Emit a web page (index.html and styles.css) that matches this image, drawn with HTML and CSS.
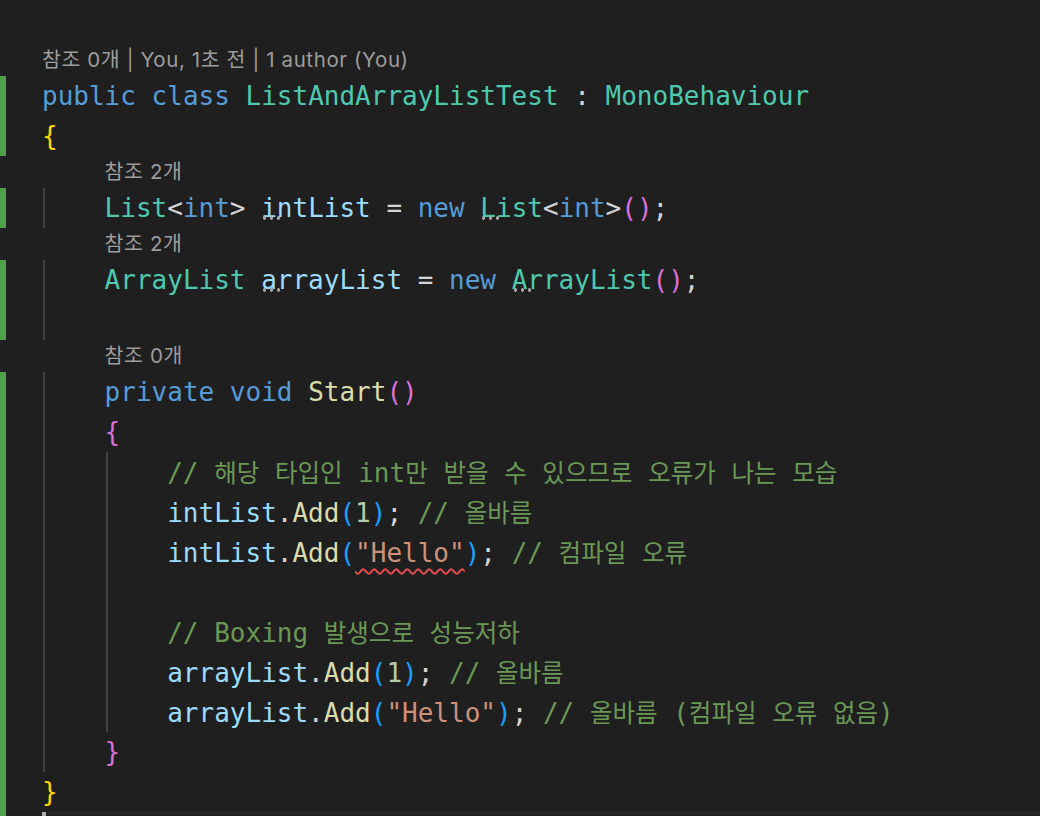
FILE: index.html
```html
<!DOCTYPE html>
<html lang="ko">
<head>
<meta charset="utf-8">
<title>ListAndArrayListTest.cs</title>
<link rel="stylesheet" href="styles.css">
</head>
<body>
<div class="editor">
  <div class="row lens"><div class="gut"></div><div class="lt">참조 0개 | You, 1초 전 | 1 author (You)</div></div>
  <div class="row"><div class="gut add"></div><div class="code"><span class="kw">public</span> <span class="kw">class</span> <span class="ty">ListAndArrayListTest</span> <span class="p">:</span> <span class="ty">MonoBehaviour</span></div></div>
  <div class="row"><div class="gut add"></div><div class="code"><span class="b1">{</span></div></div>

  <div class="row lens"><div class="gut"></div><div class="pad1"></div><div class="lt">참조 2개</div></div>
  <div class="row"><div class="gut add"></div><div class="ind"></div><div class="code"><span class="ty">List</span><span class="p">&lt;</span><span class="kw">int</span><span class="p">&gt;</span> <span class="var hint">intList</span> <span class="p">=</span> <span class="kw">new</span> <span class="ty hint">List</span><span class="p">&lt;</span><span class="kw">int</span><span class="p">&gt;</span><span class="b2">()</span><span class="p">;</span></div></div>

  <div class="row lens"><div class="gut"></div><div class="pad1"></div><div class="lt">참조 2개</div></div>
  <div class="row"><div class="gut add"></div><div class="ind"></div><div class="code"><span class="ty">ArrayList</span> <span class="var hint">arrayList</span> <span class="p">=</span> <span class="kw">new</span> <span class="ty hint">ArrayList</span><span class="b2">()</span><span class="p">;</span></div></div>
  <div class="row"><div class="gut add"></div><div class="ind"></div><div class="code"></div></div>

  <div class="row lens"><div class="gut"></div><div class="pad1"></div><div class="lt">참조 0개</div></div>
  <div class="row"><div class="gut add"></div><div class="ind"></div><div class="code"><span class="kw">private</span> <span class="kw">void</span> <span class="fn">Start</span><span class="b2">()</span></div></div>
  <div class="row"><div class="gut add"></div><div class="ind"></div><div class="code"><span class="b2">{</span></div></div>
  <div class="row"><div class="gut add"></div><div class="ind"></div><div class="ind"></div><div class="code"><span class="cm">// <span class="k">해당</span> <span class="k">타입인</span> int<span class="k">만</span> <span class="k">받을</span> <span class="k">수</span> <span class="k">있으므로</span> <span class="k">오류가</span> <span class="k">나는</span> <span class="k">모습</span></span></div></div>
  <div class="row"><div class="gut add"></div><div class="ind"></div><div class="ind"></div><div class="code"><span class="var">intList</span><span class="p">.</span><span class="fn">Add</span><span class="b3">(</span><span class="num">1</span><span class="b3">)</span><span class="p">;</span> <span class="cm">// <span class="k">올바름</span></span></div></div>
  <div class="row"><div class="gut add"></div><div class="ind"></div><div class="ind"></div><div class="code"><span class="var">intList</span><span class="p">.</span><span class="fn">Add</span><span class="b3">(</span><span class="str err">"Hello"</span><span class="b3">)</span><span class="p">;</span> <span class="cm">// <span class="k">컴파일</span> <span class="k">오류</span></span></div></div>
  <div class="row"><div class="gut add"></div><div class="ind"></div><div class="ind"></div><div class="code"></div></div>
  <div class="row"><div class="gut add"></div><div class="ind"></div><div class="ind"></div><div class="code"><span class="cm">// Boxing <span class="k">발생으로</span> <span class="k">성능저하</span></span></div></div>
  <div class="row"><div class="gut add"></div><div class="ind"></div><div class="ind"></div><div class="code"><span class="var">arrayList</span><span class="p">.</span><span class="fn">Add</span><span class="b3">(</span><span class="num">1</span><span class="b3">)</span><span class="p">;</span> <span class="cm">// <span class="k">올바름</span></span></div></div>
  <div class="row"><div class="gut add"></div><div class="ind"></div><div class="ind"></div><div class="code"><span class="var">arrayList</span><span class="p">.</span><span class="fn">Add</span><span class="b3">(</span><span class="str">"Hello"</span><span class="b3">)</span><span class="p">;</span> <span class="cm">// <span class="k">올바름</span> (<span class="k">컴파일</span> <span class="k">오류</span> <span class="k">없음</span>)</span></div></div>
  <div class="row"><div class="gut add"></div><div class="ind"></div><div class="code"><span class="b2">}</span></div></div>
  <div class="row"><div class="gut add"></div><div class="code"><span class="b1">}</span></div></div>
  <div class="row cur"><div class="gut add"></div><div class="code curline"><span class="caret"></span></div></div>
</div>
</body>
</html>
```
FILE: styles.css
```css
html, body {
  margin: 0;
  padding: 0;
  background: #1f1f1f;
  overflow: hidden;
}

.editor {
  width: 1040px;
  height: 816px;
  padding-top: 44px;
  box-sizing: border-box;
  background: #1f1f1f;
  font-family: "DejaVu Sans Mono", "Noto Sans CJK KR", monospace;
  font-size: 26px;
  color: #d4d4d4;
  overflow: hidden;
}

.row {
  display: flex;
  height: 40px;
  line-height: 40px;
  white-space: pre;
}

.row.lens {
  height: 32px;
  line-height: 32px;
}

.gut {
  flex: 0 0 42px;
}

.gut.add {
  background: linear-gradient(#4fa14b, #4fa14b) no-repeat 0 0 / 6px 100%;
}

.ind {
  flex: 0 0 4ch;
  background: linear-gradient(#404040, #404040) no-repeat 1px 0 / 2px 100%;
}

.pad1 {
  flex: 0 0 4ch;
}

.lt {
  font-family: "Inter", "Noto Sans CJK KR", sans-serif;
  font-size: 20.5px;
  letter-spacing: 0.6px;
  color: #9d9d9d;
}

.code {
  flex: 1 1 auto;
}

.kw { color: #569cd6; }
.ty { color: #4ec9b0; }
.var { color: #9cdcfe; }
.fn { color: #dcdcaa; }
.num { color: #b5cea8; }
.str { color: #ce9178; }
.cm { color: #6a9955; }
.p { color: #d4d4d4; }
.b1 { color: #ffd700; }
.b2 { color: #da70d6; }
.b3 { color: #179fff; }

.k {
  font-family: "Noto Sans CJK KR", sans-serif;
  font-size: 24.5px;
}

.hint {
  position: relative;
}

.hint::after {
  content: "";
  position: absolute;
  left: 0;
  bottom: 3px;
  width: 21px;
  height: 4px;
  background: radial-gradient(circle, #a6a6a6 1.5px, transparent 2px) 0 0 / 7px 4px repeat-x;
}

.err {
  text-decoration: underline wavy #f14c4c;
  text-decoration-thickness: 1.5px;
  text-underline-offset: 6px;
}

.curline {
  border-top: 2px solid #282828;
  position: relative;
}

.caret {
  position: absolute;
  left: 0;
  top: -2px;
  width: 4px;
  height: 40px;
  background: #aeafad;
}
```
